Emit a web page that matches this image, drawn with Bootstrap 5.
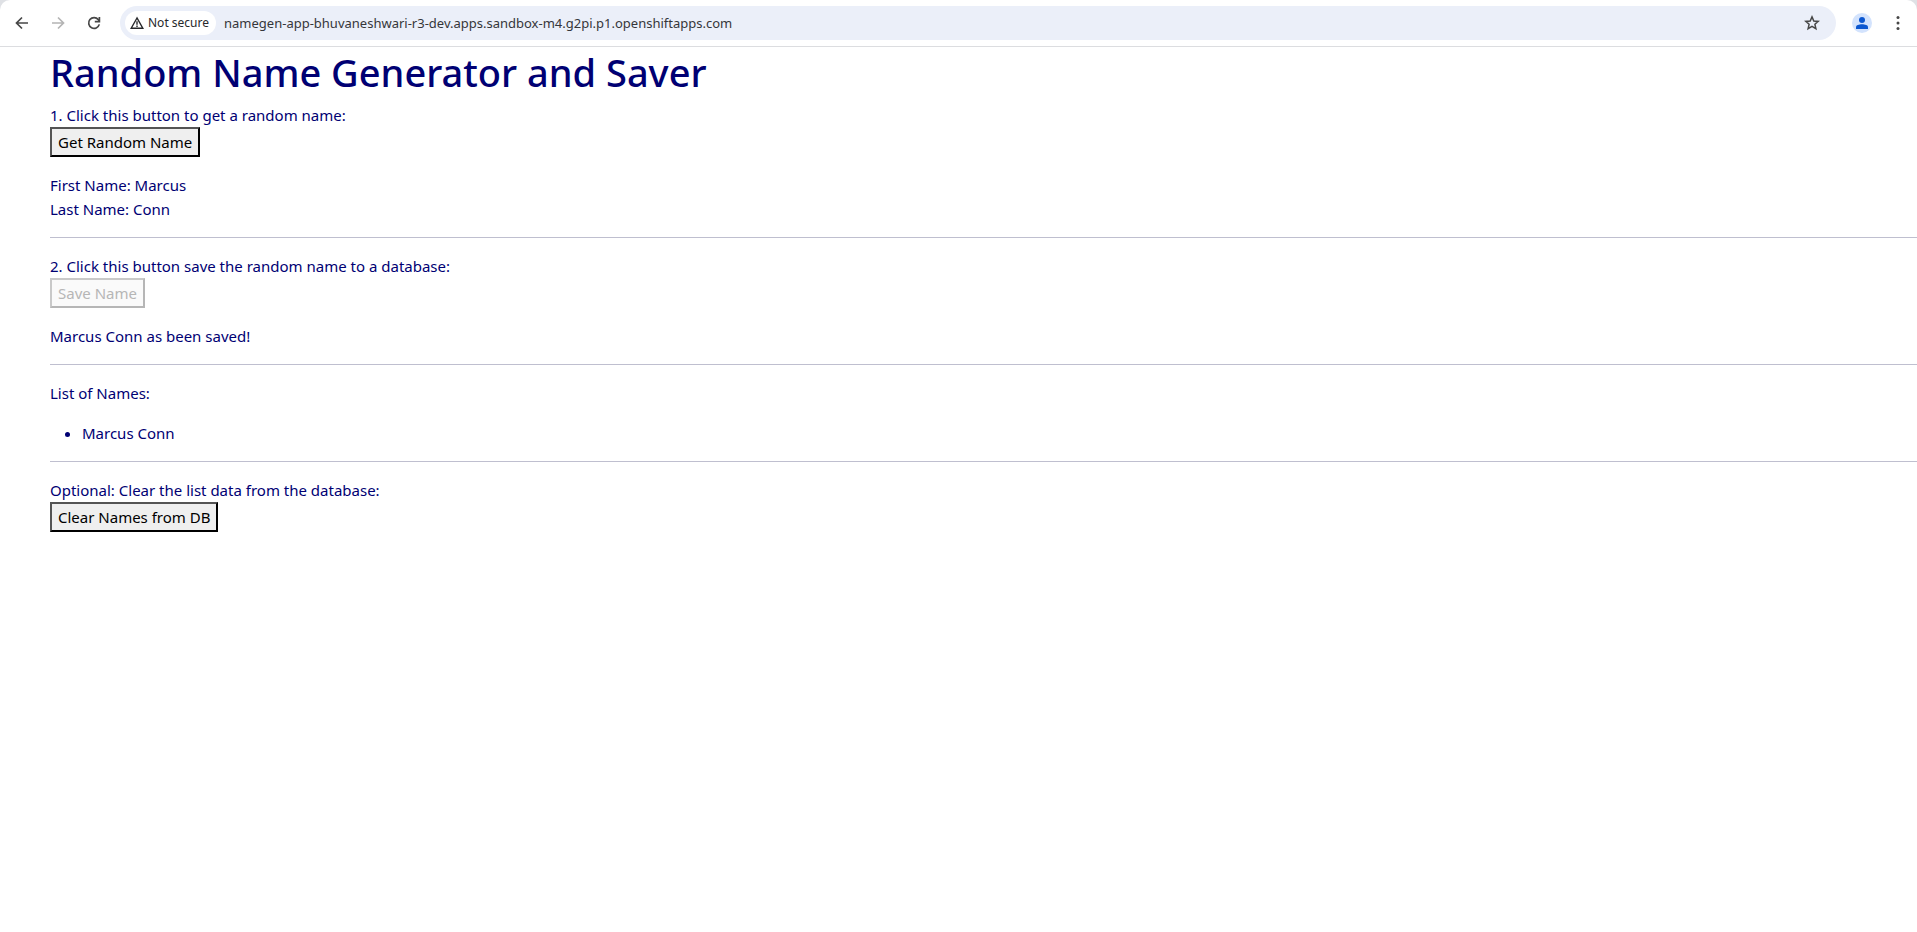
<!DOCTYPE html>
<html lang="en">
<head>
<meta charset="utf-8">
<meta name="viewport" content="width=device-width, initial-scale=1">
<title>Random Name Generator and Saver</title>
<link href="https://cdn.jsdelivr.net/npm/bootstrap@5.3.0/dist/css/bootstrap.min.css" rel="stylesheet">
<style>
  body { font-family: "Noto Sans", "Open Sans", sans-serif; font-size: 15px; line-height: 24px; color: #000073; background: #fff; }
  .browser-bar { height: 47px; border-bottom: 1px solid #dcdde0; background: #fff; color: #474747; padding: 0 3px 0 6px; border-radius: 10px 10px 0 0; }
  .corner-strip { background: #dfe1e5; }
  .tool-btn { width: 32px; height: 32px; border: 0; padding: 0; background: none; color: #474747; }
  .tool-btn:disabled { color: #b4b4b4; }
  .url-box { height: 34px; border-radius: 17px; background: #ebeff9; padding: 0 8px 0 5px; margin: 0 10px; }
  .secure-chip { height: 24px; border: 0; border-radius: 12px; background: #fff; color: #27282b; font-size: 12px; line-height: 24px; padding: 0 7px 0 5px; }
  .url-field { border: 0; background: none; outline: 0; color: #35363a; font-size: 13px; line-height: 20px; padding: 0; }
  .app-page { padding-left: 50px; }
  .app-title { font-size: 38px; line-height: 50px; font-weight: 500; color: #000073; margin-bottom: 6px; }
  .plain-btn { height: 30px; padding: 1px 6px; border: 2px outset #000; background: #efefef; color: #000; }
  .plain-btn:disabled { border-color: #c9c9c9 #b6b6b6 #b6b6b6 #c9c9c9; border-style: solid; background: #fafafa; color: #b6b6b6; }
  .app-page hr { color: #000040; }
</style>
</head>
<body>
<div class="corner-strip">
<header class="browser-bar d-flex align-items-center">
  <div class="d-flex align-items-center">
    <button class="tool-btn d-flex align-items-center justify-content-center" type="button" aria-label="Back">
      <svg width="14" height="14" viewBox="0 0 14 14" fill="none" stroke="currentColor" stroke-width="1.7"><path d="M13 7H2M7 1.5 1.5 7 7 12.5"/></svg>
    </button>
    <button class="tool-btn d-flex align-items-center justify-content-center ms-1" type="button" aria-label="Forward" disabled>
      <svg width="14" height="14" viewBox="0 0 14 14" fill="none" stroke="currentColor" stroke-width="1.7"><path d="M1 7h11M7 1.5 12.5 7 7 12.5"/></svg>
    </button>
    <button class="tool-btn d-flex align-items-center justify-content-center ms-1" type="button" aria-label="Reload">
      <svg width="14" height="14" viewBox="0 0 14 14" fill="none" stroke="currentColor" stroke-width="1.7"><path d="M12.3 8.4A5.4 5.4 0 1 1 11.3 3.6L12.2 5"/><path d="M12.4 1v4.6H7.8"/></svg>
    </button>
  </div>
  <div class="url-box d-flex align-items-center flex-grow-1">
    <button class="secure-chip d-flex align-items-center gap-1 flex-shrink-0" type="button">
      <svg width="14" height="14" viewBox="0 0 14 14" fill="none" stroke="currentColor" stroke-width="1.4"><path d="M7 2 1.2 12.2H12.8Z"/><path d="M7 5.3v3.4M7 9.5v1.4"/></svg>
      Not secure
    </button>
    <input class="url-field flex-grow-1 ms-2" type="text" aria-label="Address" value="namegen-app-bhuvaneshwari-r3-dev.apps.sandbox-m4.g2pi.p1.openshiftapps.com">
    <button class="tool-btn d-flex align-items-center justify-content-center" type="button" aria-label="Bookmark this page">
      <svg width="16" height="16" viewBox="0 0 16 16" fill="none" stroke="currentColor" stroke-width="1.5"><path d="M8 1.9 9.8 6 14.2 6.4 10.9 9.3 11.9 13.7 8 11.4 4.1 13.7 5.1 9.3 1.8 6.4 6.2 6Z"/></svg>
    </button>
  </div>
  <button class="tool-btn d-flex align-items-center justify-content-center" type="button" aria-label="Profile">
    <svg width="20" height="20" viewBox="0 0 20 20"><circle cx="10" cy="10" r="10" fill="#d3e3fd"/><g fill="#0b57d0"><circle cx="10" cy="7" r="3"/><path d="M4 16v-1.800C4 12.200 7 11.300 10 11.300s6 .9 6 2.900V16Z"/></g></svg>
  </button>
  <button class="tool-btn d-flex align-items-center justify-content-center ms-1" type="button" aria-label="Menu">
    <svg width="4" height="16" viewBox="0 0 4 16" fill="currentColor"><circle cx="2" cy="2.500" r="1.500"/><circle cx="2" cy="8" r="1.500"/><circle cx="2" cy="13.500" r="1.500"/></svg>
  </button>
</header>
</div>
<main class="app-page">
  <h1 class="app-title">Random Name Generator and Saver</h1>
  <section>
    <div>1. Click this button to get a random name:</div>
    <button class="plain-btn d-block mb-3" type="button">Get Random Name</button>
    <div>First Name: Marcus</div>
    <div>Last Name: Conn</div>
  </section>
  <hr>
  <section>
    <div>2. Click this button save the random name to a database:</div>
    <button class="plain-btn d-block mb-3" type="button" disabled>Save Name</button>
    <div>Marcus Conn as been saved!</div>
  </section>
  <hr>
  <section>
    <p class="mb-3">List of Names:</p>
    <ul class="mb-3"><li>Marcus Conn</li></ul>
  </section>
  <hr>
  <section>
    <div>Optional: Clear the list data from the database:</div>
    <button class="plain-btn d-block" type="button">Clear Names from DB</button>
  </section>
</main>
<script src="https://cdn.jsdelivr.net/npm/bootstrap@5.3.0/dist/js/bootstrap.bundle.min.js"></script>
</body>
</html>
